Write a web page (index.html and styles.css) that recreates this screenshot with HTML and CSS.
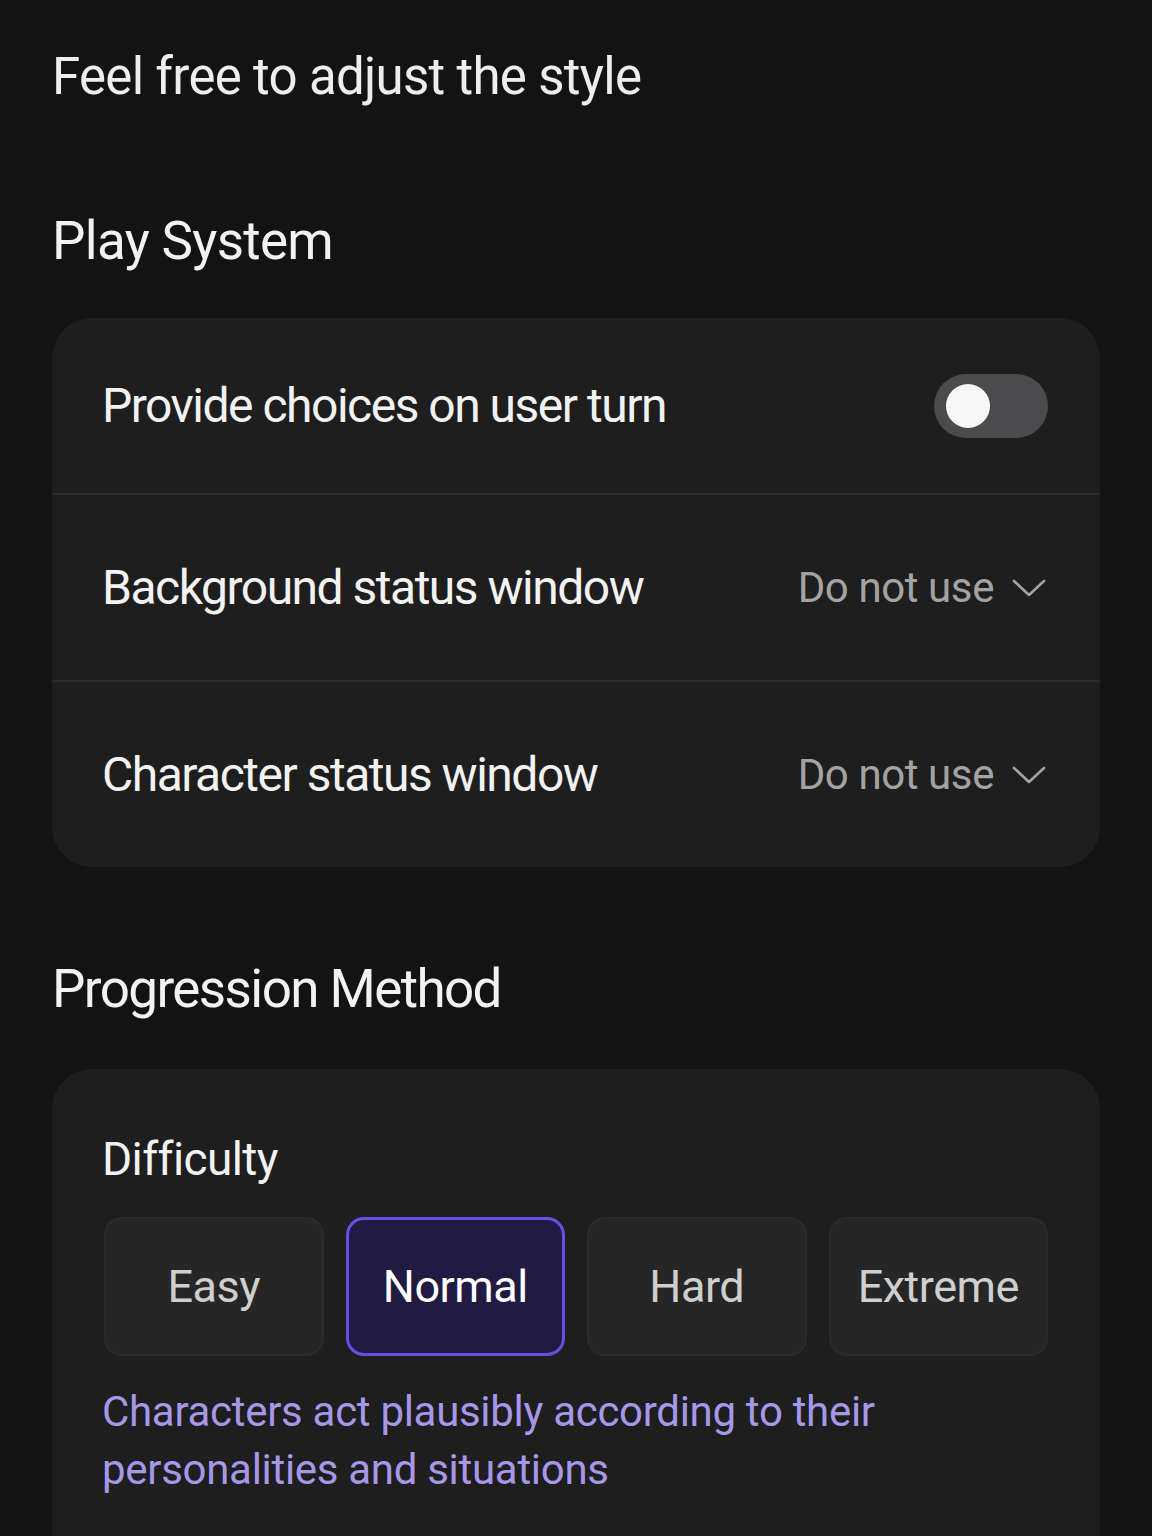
FILE: index.html
```html
<!DOCTYPE html>
<html lang="en">
<head>
  <meta charset="UTF-8" />
  <meta name="viewport" content="width=device-width, initial-scale=1.0"/>
  <title>Play settings</title>
  <link rel="stylesheet" href="styles.css">
</head>
<body>
  <h1 class="intro">Feel free to adjust the style</h1>

  <!--PLAY SYSTEM-->
  <h2 class="section-title">Play System</h2>
  <div class="card">
    <div class="row first">
      <span class="row-label">Provide choices on user turn</span>
      <button class="toggle" title="Toggle"><span class="knob"></span></button>
    </div>
    <div class="row">
      <span class="row-label">Background status window</span>
      <span class="select">Do not use
        <svg class="chevron" viewBox="0 0 34 18" width="34" height="18"><path d="M2 2 L17 16 L32 2" /></svg>
      </span>
    </div>
    <div class="row">
      <span class="row-label">Character status window</span>
      <span class="select">Do not use
        <svg class="chevron" viewBox="0 0 34 18" width="34" height="18"><path d="M2 2 L17 16 L32 2" /></svg>
      </span>
    </div>
  </div>

  <!--PROGRESSION-->
  <h2 class="section-title second">Progression Method</h2>
  <div class="card progression">
    <h3 class="field-label">Difficulty</h3>
    <div class="levels">
      <button class="level">Easy</button>
      <button class="level active">Normal</button>
      <button class="level">Hard</button>
      <button class="level">Extreme</button>
    </div>
    <p class="hint">Characters act plausibly according to their personalities and situations</p>
  </div>
</body>
</html>
```

FILE: styles.css
```css
:root {
  --bg: #131313;
  --card: #1e1e1e;
  --line: #2a2a2a;
  --text: #f2f2f2;
  --muted: #a3a3a3;
  --accent: #6c4de4;
  --accent-text: #a697e8;
}

* {
  margin: 0;
  padding: 0;
  box-sizing: border-box;
}

body {
  font-family: 'Roboto', 'Noto Sans', sans-serif;
  background-color: var(--bg);
  color: var(--text);
  padding: 47px 52px 0;
  width: 1152px;
  overflow: hidden;
}

.intro {
  font-size: 51px;
  line-height: 60px;
  font-weight: 400;
  letter-spacing: -0.7px;
  color: #eeeeee;
}

.section-title {
  font-size: 53px;
  line-height: 62px;
  font-weight: 400;
  letter-spacing: -0.7px;
  margin-top: 103px;
  margin-bottom: 46px;
}

.section-title.second {
  margin-top: 91px;
  margin-bottom: 49px;
  letter-spacing: -1.6px;
}

.card {
  background-color: var(--card);
  border-radius: 40px;
}

.row {
  display: flex;
  align-items: center;
  justify-content: space-between;
  min-height: 187px;
  padding: 0 52px 0 50px;
  border-top: 2px solid var(--line);
}

.row.first {
  min-height: 175px;
  border-top: none;
}

.row-label {
  font-size: 48px;
  letter-spacing: -1.5px;
  color: var(--text);
}

.toggle {
  width: 114px;
  height: 64px;
  border-radius: 32px;
  background-color: #4b4b4e;
  border: none;
  display: flex;
  align-items: center;
  padding-left: 12px;
  cursor: pointer;
}

.knob {
  width: 44px;
  height: 44px;
  border-radius: 50%;
  background-color: #f7f7f7;
}

.select {
  display: flex;
  align-items: center;
  gap: 18px;
  font-size: 42px;
  letter-spacing: -0.4px;
  color: var(--muted);
  margin-right: 2px;
}

.chevron {
  fill: none;
  stroke: var(--muted);
  stroke-width: 2.6;
  stroke-linecap: round;
  stroke-linejoin: round;
}

.progression {
  padding: 63px 52px 120px;
}

.field-label {
  font-size: 46px;
  line-height: 54px;
  font-weight: 400;
  letter-spacing: -0.6px;
  margin-left: -2px;
}

.levels {
  display: grid;
  grid-template-columns: repeat(4, 1fr);
  gap: 22px;
  margin-top: 31px;
}

.level {
  height: 139px;
  border-radius: 18px;
  background-color: #262626;
  border: 2px solid #2b2b2b;
  font-family: 'Roboto', sans-serif;
  font-size: 45px;
  letter-spacing: -0.5px;
  color: #cfcfcf;
  cursor: pointer;
}

.level.active {
  background-color: #211a42;
  border: 3px solid var(--accent);
  color: #ffffff;
}

.hint {
  margin-top: 27px;
  margin-left: -2px;
  font-size: 42px;
  line-height: 58px;
  letter-spacing: -0.3px;
  color: var(--accent-text);
  max-width: 900px;
}
```
